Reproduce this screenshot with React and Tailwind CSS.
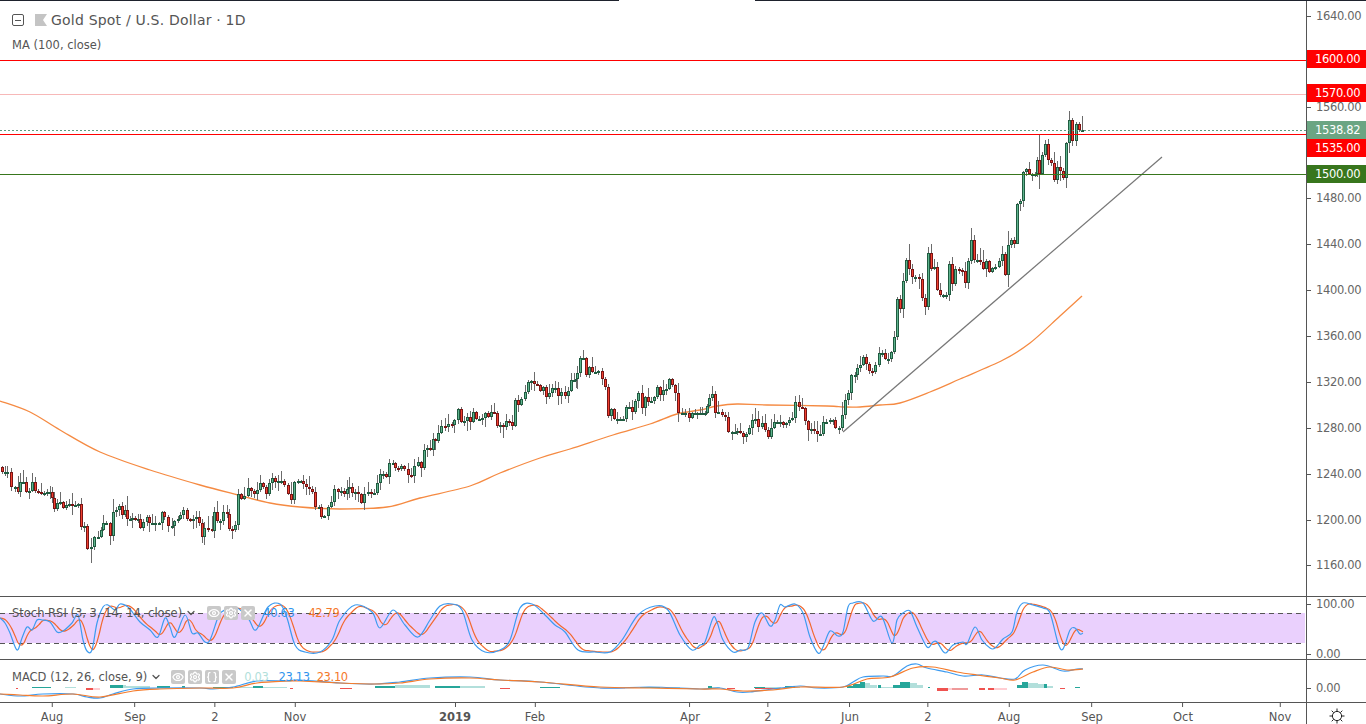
import React from 'react';
import { Eye, Settings, X, Braces, ChevronDown } from 'lucide-react';

// close prices as [x, y] in page pixels, read off the chart
const CLOSES = [
  [-1,467],[2,472],[7,472],[11,487],[15,487],[18,492],[20,482],[23,482],[26,492],[29,491],[32,482],[35,491],[38,492],[41,493],[44,493],[47,492],[52,498],[54,509],[57,503],[60,502],[63,508],[66,505],[69,504],[72,505],[75,505],[78,504],[81,527],[84,526],[87,549],[91,547],[94,537],[98,537],[101,530],[103,523],[106,523],[110,536],[113,512],[116,510],[119,506],[122,515],[125,510],[127,519],
  [132,518],[135,519],[140,528],[143,522],[147,517],[149,523],[155,523],[159,523],[162,512],[164,517],[168,526],[172,526],[174,521],[178,519],[180,515],[183,510],[187,519],[190,521],[193,519],[196,517],[199,523],[202,537],[204,528],[208,529],[212,531],[214,512],[217,521],[220,521],[223,512],[227,514],[229,529],[232,530],[235,525],[238,494],[241,499],[244,496],[248,488],[251,491],[254,494],[257,490],[260,483],[263,487],[266,494],[269,483],[272,478],[275,482],[278,481],[281,481],[284,485],[288,494],[291,500],[294,482],[298,481],[303,484],[306,487],[309,489],[312,492],[315,507],[319,507],[321,517],[324,516],[328,507],[331,502],[334,489],[338,492],[341,491],[344,494],[347,489],[349,487],[352,493],[355,492],[358,494],[361,503],[364,494],[368,492],[371,493],[374,493],[377,483],[380,474],[383,474],[386,477],[389,463],[393,463],[395,468],[398,469],[401,466],[404,469],[408,475],[411,476],[414,466],[418,462],[421,468],[424,450],
  [427,448],[430,450],[433,439],[435,441],[438,433],[441,426],[445,427],[448,424],[452,425],[454,420],[458,409],[461,422],[464,421],[467,417],[470,422],[473,412],[476,419],[482,418],[485,413],[488,417],[491,412],[494,413],[497,426],[500,425],[503,427],[506,421],[509,422],[512,426],[515,400],[518,405],[521,399],[525,392],[528,382],[531,381],[534,384],[537,385],[540,391],[543,387],[546,397],[549,393],[552,388],[558,396],[561,392],[565,396],[568,391],[571,380],[576,379],[577,373],[580,358],[583,358],[586,375],[589,367],[592,372],[598,371],[602,379],[605,387],[608,416],[611,409],[614,419],[617,419],[623,419],[626,407],[629,407],[632,412],[635,401],[638,393],[642,408],[645,397],[648,402],[651,401],[654,397],[657,387],[660,395],[663,390],[666,389],[669,379],[672,385],[675,393],[678,413],[685,413],[689,418],[692,413],[697,413],[705,413],[707,406],[709,398],[712,394],[715,413],[718,412],[722,415],[725,417],[728,432],[732,432],[737,431],[740,433],[743,437],[746,434],[749,428],[752,420],[755,419],[758,427],[762,423],[765,430],[768,437],[771,428],[774,422],[777,422],[780,422],[783,425],[786,423],[789,420],[792,418],[795,402],[799,407],[802,408],[805,421],[808,430],[811,429],[814,431],[817,434],[820,434],[823,422],[826,422],[830,420],[835,428],[839,428],[842,415],[845,400],[848,393],[851,375],[855,375],[857,368],[860,365],[863,357],[866,364],[869,371],[872,372],[875,365],[879,353],[882,353],[885,359],[888,359],[891,352],[894,337],[897,299],[900,309],[903,281],[906,260],[909,269],[912,277],[915,277],[919,279],[922,298],[925,307],[928,253],[931,269],[934,267],[937,290],[940,295],[943,295],[946,295],[949,264],[952,284],[955,269],[959,270],[962,271],[965,283],[968,261],[971,240],[974,260],[977,260],[980,262],[983,269],[986,261],[989,272],[992,268],[995,267],[999,261],[1002,254],[1005,275],[1008,245],[1011,240],[1014,244],[1017,204],[1020,201],[1023,172],[1026,169],[1029,174],[1032,174],[1037,160],[1039,174],[1042,155],[1045,144],[1048,160],[1051,163],[1054,180],[1057,167],[1060,171],[1063,178],[1066,143],[1069,120],[1072,141],[1076,124],[1079,130],[1082,130],
];

// the wicks that stick out on the real chart
const WICKS = {
  91: [null, 563], 583: [350, null], 909: [244, null], 928: [247, null], 971: [228, null],
  1008: [null, 287], 1039: [135, 189], 1069: [111, null], 1082: [116, 131], 1079: [122, 132],
  238: [null, 530], 851: [null, 400], 1017: [null, 224], 1072: [118, 146], 1076: [122, 146],
};

const MA_LINE = [
  [0,401],[30,412],[60,430],[100,452],[150,470],[200,485],[238,495],[270,503],[300,507],[340,509],[387,507],[420,498],[470,486],[500,473],[540,458],[570,449],[613,435],[650,424],[677,414],[700,410],[717,406],[737,404],[767,405],[827,406],[843,407],[860,407],[880,405],[900,403],[930,392],[960,379],[1003,360],[1030,343],[1060,316],[1082,296],
];

const K_LINE = [
  [0,618],[5,623],[10,633],[17,650],[22,638],[27,627],[32,630],[37,620],[42,620],[50,622],[57,632],[63,631],[72,623],[78,615],[83,640],[87,651],[92,650],[97,623],[103,607],[108,605],[115,610],[120,604],[128,607],[133,613],[140,622],[150,630],[158,637],[165,618],[170,627],[175,637],[185,615],[192,633],[198,633],[205,642],[210,640],[217,620],[220,613],[235,607],[248,618],[256,630],[268,607],[280,604],[287,618],[295,645],[305,652],[320,652],[332,640],[340,620],[355,605],[372,612],[380,628],[393,610],[405,625],[418,637],[430,620],[440,606],[452,604],[462,610],[472,640],[485,652],[500,650],[510,640],[520,608],[532,604],[545,615],[555,625],[565,632],[578,650],[595,652],[610,652],[622,640],[638,615],[655,606],[668,610],[680,635],[692,650],[700,645],[705,642],[713,618],[717,622],[723,640],[733,652],[740,650],[748,648],[755,622],[762,613],[770,626],[775,620],[780,605],[785,607],[795,604],[803,613],[810,637],[818,653],[823,647],[830,631],[838,636],[843,632],[848,607],[853,603],[863,603],[873,621],[882,617],[892,643],[897,620],[903,613],[910,611],[917,627],[927,647],[933,642],[937,642],[945,653],[953,645],[963,642],[967,644],[975,627],[982,640],[990,648],[995,648],[1003,639],[1012,632],[1017,612],[1023,603],[1033,605],[1043,608],[1050,613],[1058,643],[1063,649],[1070,630],[1075,628],[1080,634],[1083,633],
];

const MACD_LINE = [
  [0,694],[20,696],[43,694],[73,694],[87,697],[100,698],[113,694],[133,689],[160,688],[200,688],[213,689],[233,687],[257,681],[287,681],[300,680],[340,683],[375,684],[400,682],[430,678],[470,677],[500,680],[540,682],[600,688],[650,687],[700,689],[720,688],[737,692],[750,692],[773,689],[800,686],[817,688],[843,687],[853,682],[863,677],[883,676],[893,676],[907,666],[917,664],[927,668],[947,672],[963,676],[983,675],[1000,678],[1015,679],[1025,670],[1043,665],[1063,671],[1077,669],[1083,669],
];
const SIGNAL_LINE = [
  [0,694],[20,695],[43,696],[73,694],[100,697],[133,691],[160,689],[200,688],[233,688],[257,683],[287,681],[300,681],[340,683],[375,684],[400,683],[430,679],[470,678],[500,680],[540,682],[600,687],[650,688],[700,689],[720,689],[743,691],[773,690],[800,687],[843,687],[867,679],[890,677],[913,668],[933,667],[957,672],[977,675],[1000,678],[1015,680],[1033,672],[1050,667],[1067,670],[1083,669],
];

// [first x, last x, height, colour] of the macd histogram
const HIST = [
  [16,18,-1,'#ef5350'],[32,51,1,'#26a69a'],[65,76,1,'#b2dfdb'],[86,93,-2,'#ef5350'],[93,100,-2,'#ffcdd2'],[110,123,3,'#26a69a'],[123,126,3,'#b2dfdb'],[126,150,2,'#b2dfdb'],[157,170,2,'#26a69a'],[182,185,2,'#26a69a'],[213,233,1,'#26a69a'],[237,253,1,'#b2dfdb'],[253,263,2,'#26a69a'],[263,287,1,'#b2dfdb'],[290,293,-1,'#ef5350'],
  [340,352,-1,'#ef5350'],[375,395,2,'#26a69a'],[395,430,3,'#b2dfdb'],[435,460,2,'#26a69a'],[460,485,2,'#b2dfdb'],[500,510,-1,'#ef5350'],[540,560,1,'#26a69a'],[600,625,-1,'#ffcdd2'],[640,660,1,'#26a69a'],[660,680,1,'#b2dfdb'],[727,735,-1,'#ef5350'],[755,780,-1,'#ef5350'],
  [708,712,2,'#26a69a'],[712,720,1,'#b2dfdb'],[754,765,1,'#26a69a'],[765,781,1,'#b2dfdb'],[785,795,2,'#26a69a'],[795,800,1,'#b2dfdb'],
  [847,853,2,'#26a69a'],[853,860,4,'#26a69a'],[860,865,6,'#26a69a'],[865,870,5,'#b2dfdb'],[870,877,3,'#b2dfdb'],[878,881,3,'#26a69a'],[881,893,1,'#b2dfdb'],[893,900,3,'#26a69a'],[900,910,6,'#26a69a'],[910,917,5,'#b2dfdb'],[917,923,3,'#b2dfdb'],[928,930,1,'#26a69a'],[937,948,-3,'#ef5350'],[948,952,-2,'#ffcdd2'],[952,968,-2,'#ef9a9a'],[979,985,-2,'#ef5350'],[988,994,-2,'#ef5350'],[994,1007,-2,'#ffcdd2'],[1017,1022,3,'#26a69a'],[1022,1028,6,'#26a69a'],[1028,1038,5,'#b2dfdb'],[1038,1044,4,'#b2dfdb'],[1044,1047,4,'#26a69a'],[1047,1053,2,'#b2dfdb'],[1060,1065,-1,'#ef5350'],[1075,1080,1,'#26a69a'],
];

const PRICE_TICKS = [
  [15,'1640.00'],[106,'1560.00'],[197,'1480.00'],[243,'1440.00'],[289,'1400.00'],[335,'1360.00'],[381,'1320.00'],[427,'1280.00'],[473,'1240.00'],[519,'1200.00'],[564,'1160.00'],
];
const PRICE_TAGS = [
  { y: 60, text: '1600.00', bg: 'bg-[#ff0000]' },
  { y: 94, text: '1570.00', bg: 'bg-[#ff0000]' },
  { y: 131, text: '1538.82', bg: 'bg-[#6ba583]' },
  { y: 149, text: '1535.00', bg: 'bg-[#ff0000]' },
  { y: 175, text: '1500.00', bg: 'bg-[#38761d]' },
];
const TIME_TICKS = [
  [52,'Aug'],[135,'Sep'],[215,'2'],[295,'Nov'],[455,'2019'],[535,'Feb'],[690,'Apr'],[768,'2'],[850,'Jun'],[928,'2'],[1009,'Aug'],[1092,'Sep'],[1183,'Oct'],[1280,'Nov'],
];

const buildCandles = () => {
  let seed = 7;
  const rand = () => {
    seed = (seed * 16807) % 2147483647;
    return seed / 2147483647;
  };
  const out = [];
  for (let i = 1; i < CLOSES.length; i++) {
    const [px, py] = CLOSES[i - 1];
    const [x, y] = CLOSES[i];
    if (x - px > 4) {
      const steps = Math.round((x - px) / 3);
      for (let s = 1; s < steps; s++) {
        out.push({ x: Math.round(px + ((x - px) * s) / steps), open: py, close: py });
      }
    }
    out.push({ x, open: py, close: y });
  }
  return out.map((c) => {
    const hi = Math.min(c.open, c.close);
    const lo = Math.max(c.open, c.close);
    const fix = WICKS[c.x] || [];
    return {
      ...c,
      top: fix[0] ?? hi - 1 - Math.round(rand() * rand() * 13),
      bottom: fix[1] ?? lo + 1 + Math.round(rand() * rand() * 11),
    };
  });
};

const candles = buildCandles();

// catmull-rom through the read-off points so lines don't look angular
const smoothPath = (line) => {
  let d = `M${line[0][0]} ${line[0][1]}`;
  for (let i = 0; i < line.length - 1; i++) {
    const p0 = line[i - 1] || line[i];
    const p1 = line[i];
    const p2 = line[i + 1];
    const p3 = line[i + 2] || p2;
    const c1x = p1[0] + (p2[0] - p0[0]) / 6;
    const c1y = p1[1] + (p2[1] - p0[1]) / 6;
    const c2x = p2[0] - (p3[0] - p1[0]) / 6;
    const c2y = p2[1] - (p3[1] - p1[1]) / 6;
    d += `C${c1x} ${c1y} ${c2x} ${c2y} ${p2[0]} ${p2[1]}`;
  }
  return d;
};

const valueAt = (line, x) => {
  if (x <= line[0][0]) return line[0][1];
  for (let i = 1; i < line.length; i++) {
    if (x <= line[i][0]) {
      const [x0, y0] = line[i - 1];
      const [x1, y1] = line[i];
      return y0 + ((y1 - y0) * (x - x0)) / (x1 - x0);
    }
  }
  return line[line.length - 1][1];
};

// stoch %D is a lagged average of %K
const D_LINE = [];
for (let x = 0; x <= 1083; x += 3) {
  D_LINE.push([x, (valueAt(K_LINE, x - 1) + valueAt(K_LINE, x - 4) + valueAt(K_LINE, x - 7)) / 3]);
}

const Candle = ({ c }) => {
  const up = c.close < c.open;
  const flat = Math.abs(c.open - c.close) < 1;
  const y = Math.min(c.open, c.close);
  const h = Math.max(Math.abs(c.open - c.close), 2);
  return (
    <g shapeRendering="crispEdges">
      <rect x={c.x} y={c.top} width="1" height={c.bottom - c.top} fill="#6b6b6b" />
      <rect x={c.x - 1} y={y} width="3" height={h} fill={up || flat ? '#1f5c40' : '#7a1414'} />
      {h > 2 && <rect x={c.x} y={y + 1} width="1" height={h - 2} fill={up ? '#5fb38e' : '#f0402f'} />}
    </g>
  );
};

const IconButton = ({ children }) => (
  <span className="flex h-[14px] w-[14px] items-center justify-center rounded-[2px] bg-[#c9c9c9] text-white">
    {children}
  </span>
);

const Axis = ({ children, className = '' }) => (
  <div className={`relative w-[60px] shrink-0 border-l border-[#555555] ${className}`}>{children}</div>
);

const AxisLabel = ({ y, text, top = 0 }) => (
  <div className="absolute left-0 flex items-center" style={{ top: y - top - 8 }}>
    <span className="h-px w-[4px] bg-[#555555]" />
    <span className="ml-[5px] text-[11.5px] leading-4 tracking-[-0.35px] text-[#666666]">{text}</span>
  </div>
);

const GearIcon = () => (
  <svg width="18" height="18" viewBox="0 0 18 18" fill="none" stroke="#222222" strokeWidth="1">
    <circle cx="9" cy="9" r="4.6" />
    <path d="M9 1.5v2.8M9 13.7v2.8M1.5 9h2.8M13.7 9h2.8M3.7 3.7l2 2M12.3 12.3l2 2M14.3 3.7l-2 2M5.7 12.3l-2 2" />
  </svg>
);

const App = () => {
  return (
    <div className="flex h-[724px] w-[1366px] flex-col overflow-hidden bg-white font-['DejaVu_Sans',sans-serif] text-[#555555]">
      <div className="flex h-px shrink-0">
        <div className="w-[619px] bg-[#1e222d]" />
        <div className="flex-1" />
        <div className="w-[611px] bg-[#1e222d]" />
      </div>

      {/* Price pane */}
      <div className="flex h-[596px] shrink-0 border-b border-[#555555]">
        <div className="relative flex-1">
          <svg className="block" width="1306" height="595" viewBox="0 1 1306 595">
            <path d={smoothPath(MA_LINE)} fill="none" stroke="#f58a42" strokeWidth="1.3" />
            <line x1="843" y1="432" x2="1162" y2="157" stroke="#777777" strokeWidth="1.2" />
            {candles.map((c, i) => (
              <Candle key={i} c={c} />
            ))}
            <g shapeRendering="crispEdges">
              <line x1="0" y1="60.5" x2="1306" y2="60.5" stroke="#ff0000" />
              <line x1="0" y1="94.5" x2="1306" y2="94.5" stroke="#f7b8b8" />
              <line x1="0" y1="130.5" x2="1306" y2="130.5" stroke="#5c9c7d" strokeDasharray="2 2" />
              <line x1="0" y1="134.5" x2="1306" y2="134.5" stroke="#ff0000" />
              <line x1="0" y1="174.5" x2="1306" y2="174.5" stroke="#38761d" />
            </g>
          </svg>

          <div className="absolute left-[12px] top-[12px] flex items-center">
            <span className="flex h-[12px] w-[12px] items-center justify-center rounded-[2px] border border-[#555555]">
              <span className="h-px w-[6px] bg-[#555555]" />
            </span>
            <svg className="ml-[11px]" width="12" height="12" viewBox="0 0 12 12">
              <path d="M0 0h12L8 6l4 6H0z" fill="#c4c4c4" />
            </svg>
            <span className="ml-[4px] text-[14px] leading-[14px] tracking-[0.2px]">Gold Spot / U.S. Dollar · 1D</span>
          </div>
          <div className="absolute left-[12px] top-[37px] text-[11.5px] leading-[14px]">MA (100, close)</div>
        </div>
        <Axis>
          {PRICE_TICKS.map(([y, text]) => (
            <AxisLabel key={text} y={y} text={text} />
          ))}
          {PRICE_TAGS.map((t) => (
            <div
              key={t.text}
              className={`absolute left-0 right-0 flex h-[18px] items-center pl-[8px] pt-[2px] text-[11.5px] tracking-[-0.35px] text-white ${t.bg}`}
              style={{ top: t.y - 11 }}
            >
              {t.text}
            </div>
          ))}
        </Axis>
      </div>

      {/* Stoch RSI pane */}
      <div className="flex h-[63px] shrink-0 border-b border-[#555555]">
        <div className="relative flex-1">
          <svg className="block" width="1306" height="62" viewBox="0 597 1306 62">
            <rect x="0" y="613" width="1305" height="30" fill="#ead0fd" />
            <g shapeRendering="crispEdges" stroke="#555555" strokeDasharray="5 4">
              <line x1="0" y1="613.5" x2="1305" y2="613.5" />
              <line x1="0" y1="643.5" x2="1305" y2="643.5" />
            </g>
            <path d={smoothPath(D_LINE)} fill="none" stroke="#f2682f" strokeWidth="1.2" />
            <path d={smoothPath(K_LINE)} fill="none" stroke="#3d9bf0" strokeWidth="1.2" />
          </svg>
          <div className="absolute left-[12px] top-[9px] flex items-center text-[11.5px] leading-[14px]">
            <span>Stoch RSI (3, 3, 14, 14, close)</span>
            <ChevronDown className="ml-[3px]" size={12} strokeWidth={2.5} />
            <span className="ml-[10px] flex gap-[3px]">
              <IconButton><Eye size={12} strokeWidth={2.5} /></IconButton>
              <IconButton><Settings size={12} strokeWidth={2.5} /></IconButton>
              <IconButton><X size={12} strokeWidth={3} /></IconButton>
            </span>
            <span className="ml-[8px] tracking-[-0.35px] text-[#2f94ee]">40.63</span>
            <span className="ml-[14px] tracking-[-0.35px] text-[#f5782a]">42.79</span>
          </div>
        </div>
        <Axis>
          <AxisLabel y={603} text="100.00" top={596} />
          <AxisLabel y={653} text="0.00" top={596} />
        </Axis>
      </div>

      {/* MACD pane */}
      <div className="flex h-[43px] shrink-0 border-b border-[#555555]">
        <div className="relative flex-1">
          <svg className="block" width="1306" height="42" viewBox="0 660 1306 42">
            <g shapeRendering="crispEdges">
              {HIST.map(([x0, x1, h, color], i) => (
                <rect key={i} x={x0} y={h > 0 ? 688 - h : 688} width={x1 - x0} height={Math.abs(h)} fill={color} />
              ))}
            </g>
            <path d={smoothPath(MACD_LINE)} fill="none" stroke="#3d9bf0" strokeWidth="1.2" />
            <path d={smoothPath(SIGNAL_LINE)} fill="none" stroke="#f57c2c" strokeWidth="1.2" />
          </svg>
          <div className="absolute left-[12px] top-[10px] flex items-center text-[11.5px] leading-[14px]">
            <span>MACD (12, 26, close, 9)</span>
            <ChevronDown className="ml-[3px]" size={12} strokeWidth={2.5} />
            <span className="ml-[9px] flex gap-[3px]">
              <IconButton><Eye size={12} strokeWidth={2.5} /></IconButton>
              <IconButton><Settings size={12} strokeWidth={2.5} /></IconButton>
              <IconButton><Braces size={12} strokeWidth={2.5} /></IconButton>
              <IconButton><X size={12} strokeWidth={3} /></IconButton>
            </span>
            <span className="ml-[8px] tracking-[-0.35px] text-[#b2dfdb]">0.03</span>
            <span className="ml-[10px] tracking-[-0.35px] text-[#2f94ee]">23.13</span>
            <span className="ml-[7px] tracking-[-0.35px] text-[#f5782a]">23.10</span>
          </div>
        </div>
        <Axis>
          <AxisLabel y={687} text="0.00" top={659} />
        </Axis>
      </div>

      {/* Time axis */}
      <div className="flex flex-1">
        <div className="relative flex-1">
          {TIME_TICKS.map(([x, text]) => (
            <div key={x} className="absolute top-0 flex -translate-x-1/2 flex-col items-center" style={{ left: x }}>
              <span className="h-[4px] w-px bg-[#555555]" />
              <span className={`mt-[3px] text-[11.5px] leading-[14px] ${text === '2019' ? 'font-bold' : ''}`}>{text}</span>
            </div>
          ))}
        </div>
        <Axis className="flex items-center justify-center pt-[4px]">
          <GearIcon />
        </Axis>
      </div>
    </div>
  );
};

export default App;
